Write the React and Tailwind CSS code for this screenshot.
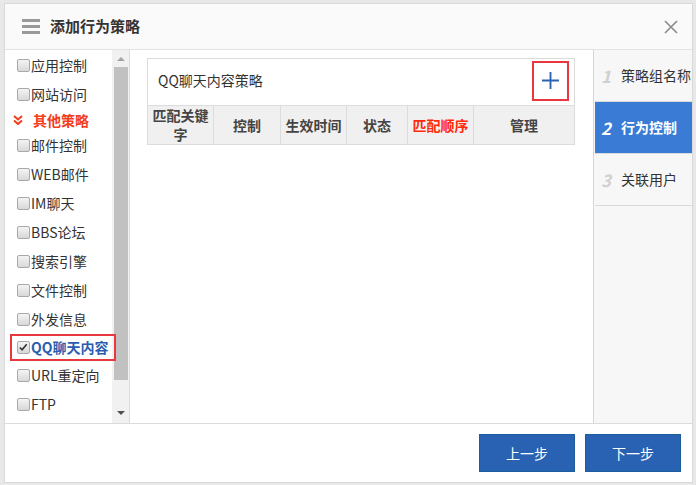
import React from 'react';

const font = { fontFamily: '"Noto Sans CJK SC", "Noto Sans", sans-serif' };

const items = [
  { label: '应用控制' },
  { label: '网站访问' },
  { label: '其他策略', group: true },
  { label: '邮件控制' },
  { label: 'WEB邮件' },
  { label: 'IM聊天' },
  { label: 'BBS论坛' },
  { label: '搜索引擎' },
  { label: '文件控制' },
  { label: '外发信息' },
  { label: 'QQ聊天内容', checked: true },
  { label: 'URL重定向' },
  { label: 'FTP' },
];

function Box({ checked }) {
  return (
    <span className="relative inline-block w-[13px] h-[13px] shrink-0 rounded-[2px] border border-[#a9a9a9] bg-gradient-to-b from-[#f4f4f4] to-[#d8d8d8]">
      {checked && (
        <svg viewBox="0 0 12 12" className="absolute left-[0px] top-[0px] w-[11px] h-[11px]">
          <path d="M2 6 L4.5 8.5 L9.5 2.5" fill="none" stroke="#333" strokeWidth="1.8" />
        </svg>
      )}
    </span>
  );
}

const cols = [
  { t: ['匹配关键', '字'], w: 'w-[66px]' },
  { t: ['控制'], w: 'w-[67px]' },
  { t: ['生效时间'], w: 'w-[66px]' },
  { t: ['状态'], w: 'w-[61px]' },
  { t: ['匹配顺序'], w: 'w-[66px]', red: true },
  { t: ['管理'], w: 'flex-1' },
];

const steps = [
  { n: '1', label: '策略组名称' },
  { n: '2', label: '行为控制', active: true },
  { n: '3', label: '关联用户' },
];

export default function App() {
  return (
    <div className="w-[696px] h-[485px] bg-[#e8e8e8] pt-[3px] pl-[4px] overflow-hidden" style={font}>
      <div className="w-[689px] h-[480px] border border-[#d9d9d9] bg-white flex flex-col">
        {/* header */}
        <div className="h-[46px] shrink-0 bg-[#fafafa] border-b border-[#e3e3e3] flex items-center pl-[17px] pr-[14px]">
          <div className="flex flex-col gap-[3px] w-[18px]">
            <span className="h-[3px] bg-[#999]" />
            <span className="h-[3px] bg-[#999]" />
            <span className="h-[3px] bg-[#999]" />
          </div>
          <span className="ml-[10px] text-[15px] font-bold text-[#333]">添加行为策略</span>
          <svg viewBox="0 0 14 14" className="ml-auto w-[14px] h-[14px]">
            <path d="M1 1 L13 13 M13 1 L1 13" stroke="#8a8a8a" strokeWidth="1.6" />
          </svg>
        </div>

        {/* body */}
        <div className="flex-1 flex min-h-0">
          {/* left */}
          <div className="w-[125px] shrink-0 border-r border-[#dcdcdc] flex">
            <div className="w-[107px] pt-[1px]">
              {items.map((it) =>
                it.group ? (
                  <div key={it.label} className="h-[22px] flex items-center pl-[8px] text-[14px] font-bold text-[#f23d1c]">
                    <svg viewBox="0 0 10 10" className="w-[10px] h-[10px] mr-[10px]">
                      <path d="M1 1 L5 4.5 L9 1 M1 5.5 L5 9 L9 5.5" fill="none" stroke="#f23d1c" strokeWidth="2" />
                    </svg>
                    {it.label}
                  </div>
                ) : it.checked ? (
                  <div key={it.label} className="relative z-10 ml-[5px] w-[106px] h-[27px] border-[2px] border-[#e8373e] flex items-center pl-[5px] text-[14px] font-bold text-[#2a5db0] whitespace-nowrap">
                    <Box checked />
                    <span className="ml-[1px]">{it.label}</span>
                  </div>
                ) : (
                  <div key={it.label} className="h-[29px] flex items-center pl-[12px] text-[14px] text-[#333]">
                    <Box />
                    <span className="ml-[1px]">{it.label}</span>
                  </div>
                )
              )}
            </div>
            <div className="w-[17px] bg-[#f1f1f1] flex flex-col items-center">
              <div className="h-[17px] flex items-center justify-center">
                <span className="w-0 h-0 border-l-[4px] border-r-[4px] border-b-[4px] border-l-transparent border-r-transparent border-b-[#a3a3a3]" />
              </div>
              <div className="w-[14px] h-[313px] bg-[#c1c1c1]" />
              <div className="flex-1 flex items-end justify-center pb-[8px]">
                <span className="w-0 h-0 border-l-[4px] border-r-[4px] border-t-[4px] border-l-transparent border-r-transparent border-t-[#505050]" />
              </div>
            </div>
          </div>

          {/* center */}
          <div className="flex-1 pl-[17px] pt-[8px] pr-[16px]">
            <div className="w-[428px] border border-[#dcdcdc]">
              <div className="h-[46px] flex items-center pl-[10px] pr-[5px]">
                <span className="text-[14px] text-[#333] -mt-[3px]">QQ聊天内容策略</span>
                <div className="ml-auto -mt-[3px] w-[37px] h-[40px] border-[2px] border-[#e8373e] flex items-center justify-center">
                  <svg viewBox="0 0 18 18" className="w-[17px] h-[17px]">
                    <path d="M9 0 V18 M0 9 H18" stroke="#2a62b4" strokeWidth="2" />
                  </svg>
                </div>
              </div>
              <div className="h-[39px] flex bg-[#f0f0f0] border-t border-[#dcdcdc]">
                {cols.map((c, i) => (
                  <div
                    key={i}
                    className={`${c.w} ${i < cols.length - 1 ? 'border-r border-[#dcdcdc]' : ''} flex flex-col items-center justify-center text-[14px] font-bold leading-[19px] ${c.red ? 'text-[#ff2a0c]' : 'text-[#444]'}`}
                  >
                    {c.t.map((l) => (
                      <span key={l}>{l}</span>
                    ))}
                  </div>
                ))}
              </div>
            </div>
          </div>

          {/* right */}
          <div className="w-[99px] shrink-0 border-l border-[#d6d6d6] bg-[#f7f7f7] pl-[1px]">
            {steps.map((s) => (
              <div
                key={s.n}
                className={`h-[52px] flex items-center border-b border-[#dadada] ${s.active ? 'bg-[#3a7bd5] text-white font-bold' : 'text-[#333]'}`}
              >
                <span
                  className={`w-[26px] pl-[6px] text-[17px] font-bold italic ${s.active ? 'text-white' : 'text-[#d0d0d0]'}`}
                >
                  {s.n}
                </span>
                <span className="text-[14px] whitespace-nowrap">{s.label}</span>
              </div>
            ))}
          </div>
        </div>

        {/* footer */}
        <div className="h-[59px] shrink-0 border-t border-[#dcdcdc] flex items-center justify-end gap-[10px] pr-[11px]">
          <button className="w-[96px] h-[38px] bg-[#2a62b3] border border-[#1a5f9c] text-white text-[14px]">上一步</button>
          <button className="w-[96px] h-[38px] bg-[#2a62b3] border border-[#1a5f9c] text-white text-[14px]">下一步</button>
        </div>
      </div>
    </div>
  );
}
